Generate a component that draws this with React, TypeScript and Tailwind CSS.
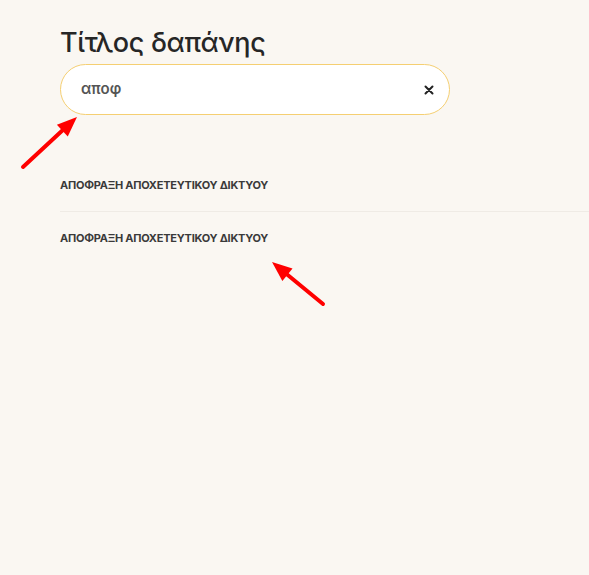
const items = ["ΑΠΟΦΡΑΞΗ ΑΠΟΧΕΤΕΥΤΙΚΟΥ ΔΙΚΤΥΟΥ", "ΑΠΟΦΡΑΞΗ ΑΠΟΧΕΤΕΥΤΙΚΟΥ ΔΙΚΤΥΟΥ"];

function Arrow({ x1, y1, x2, y2 }: { x1: number; y1: number; x2: number; y2: number }) {
  const a = Math.atan2(y2 - y1, x2 - x1);
  const len = 20;
  const w = 8;
  const bx = x2 - Math.cos(a) * len;
  const by = y2 - Math.sin(a) * len;
  const px = -Math.sin(a) * w;
  const py = Math.cos(a) * w;
  return (
    <g>
      <line x1={x1} y1={y1} x2={bx} y2={by} stroke="#ff0000" strokeWidth={4} strokeLinecap="round" />
      <polygon points={`${x2},${y2} ${bx + px},${by + py} ${bx - px},${by - py}`} fill="#ff0000" />
    </g>
  );
}

export default function App() {
  return (
    <div className="relative h-[575px] w-[589px] overflow-hidden bg-[#faf7f2] font-['Inter','Noto_Sans',sans-serif]">
      <div className="pl-[60px] pt-[25px]">
        <h1 className="text-[27px] font-medium leading-[36px] tracking-[-0.3px] text-[#262626]">Τίτλος δαπάνης</h1>
        <div className="mt-[3px] flex h-[51px] w-[390px] items-center rounded-full border border-[#f5cf72] bg-white pl-[20px] pr-[15px]">
          <span className="flex-1 text-[15px] font-semibold text-[#555]">αποφ</span>
          <svg width="10" height="10" viewBox="0 0 10 10">
            <path d="M1.5 1.5 L8.5 8.5 M8.5 1.5 L1.5 8.5" stroke="#222" strokeWidth="2" strokeLinecap="round" />
          </svg>
        </div>
        <ul className="mt-[44px]">
          {items.map((t, i) => (
            <li
              key={i}
              className={`flex h-[53px] items-center text-[11px] font-bold tracking-[-0.25px] text-[#3a3a3a] ${i === 0 ? "border-b border-[#efebe5]" : ""}`}
            >
              {t}
            </li>
          ))}
        </ul>
      </div>
      <svg className="pointer-events-none absolute left-0 top-0" width="589" height="575">
        <Arrow x1={23} y1={167} x2={77} y2={117} />
        <Arrow x1={323} y1={304} x2={272} y2={262} />
      </svg>
    </div>
  );
}
